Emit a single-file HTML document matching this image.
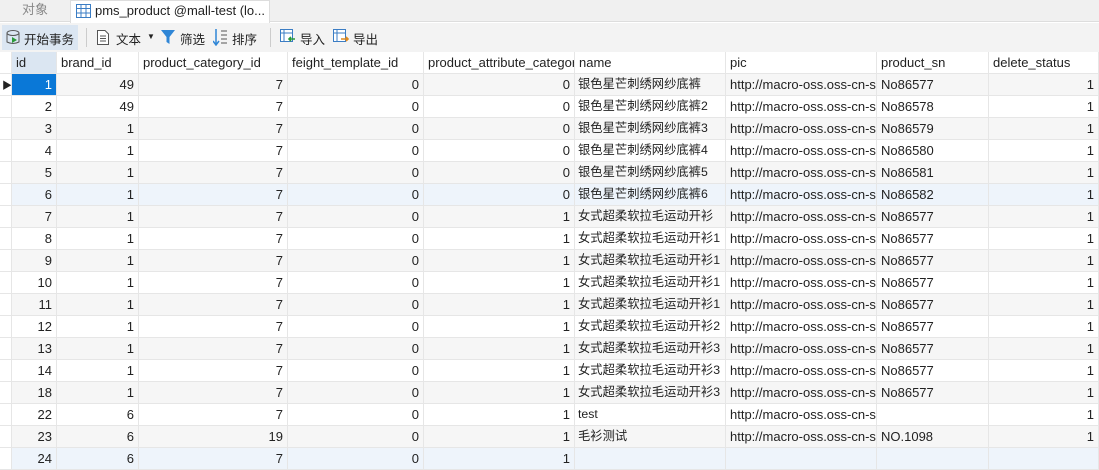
<!DOCTYPE html><html><head><meta charset="utf-8"><style>
*{margin:0;padding:0;box-sizing:border-box}
body{width:1099px;height:456px;overflow:hidden;background:#fff;font-family:"Liberation Sans","Noto Sans CJK SC",sans-serif;font-size:13px;color:#222;position:relative}
.tabs{position:absolute;left:0;top:0;width:1099px;height:22px;background:#f0f0f0;border-bottom:1px solid #ddd}
.t1{position:absolute;left:0;top:0;width:70px;height:22px;line-height:20px;text-align:center;color:#888}
.t2{position:absolute;left:70px;top:0;width:200px;height:23px;background:#fff;border:1px solid #ddd;border-bottom:none;line-height:20px;padding-left:24px}
.tb{position:absolute;left:0;top:23px;width:1099px;height:29px;background:#f3f3f3}
.tb span{position:absolute;top:6px;font-size:12.5px}
.grid{position:absolute;left:0;top:52px}
.row{position:absolute;left:0;height:22px;width:1099px}
.c{position:absolute;top:0;height:22px;line-height:21px;border-right:1px solid #e6e6e6;border-bottom:1px solid #e6e6e6;padding:0 4px;white-space:nowrap;overflow:hidden}
.r{text-align:right}
.nm{font-size:12.3px;padding-left:3px}
.hd .c{background:#fff;height:22px;line-height:21px;font-size:13px}
</style></head><body>
<div class="tabs"><div class="t1">对象</div><div class="t2"><svg style="position:absolute;left:5px;top:3px" width="15" height="14"><rect x="0.5" y="0.5" width="14" height="13" fill="#fff" stroke="#3b7dc4"/><path d="M0 4.5H15M0 9H15M5 0V14M10 0V14" stroke="#3b7dc4"/></svg>pms_product @mall-test (lo...</div></div>
<div class="tb">
<div style="position:absolute;left:2px;top:2px;width:76px;height:25px;background:#dbe6f2"></div>
<svg style="position:absolute;left:6px;top:7px" width="14" height="15"><ellipse cx="7" cy="3" rx="6" ry="2.5" fill="none" stroke="#555"/><path d="M1 3V12Q7 15 13 12V3" fill="none" stroke="#555"/><path d="M6 7L11 10L6 13Z" fill="#2a9a3a"/></svg>
<span style="left:24px">开始事务</span>
<div style="position:absolute;left:86px;top:5px;width:1px;height:19px;background:#ccc"></div>
<svg style="position:absolute;left:97px;top:7px" width="12" height="15"><path d="M0.5 0.5H8L11.5 4V14.5H0.5Z" fill="#fff" stroke="#555"/><path d="M3 6H9M3 8.5H9M3 11H9" stroke="#555"/></svg>
<span style="left:116px">文本</span><span style="left:147px;font-size:8px;top:9px">▼</span>
<svg style="position:absolute;left:161px;top:7px" width="14" height="15"><path d="M0 0H14L8.5 7V14L5.5 12V7Z" fill="#2f86d6"/></svg>
<span style="left:180px">筛选</span>
<svg style="position:absolute;left:213px;top:6px" width="14" height="17"><path d="M3 0V15M0 12L3 16L6 12" stroke="#2f86d6" fill="none" stroke-width="1.5"/><path d="M8 2H14M8 6H14M8 10H14M8 14H14" stroke="#555"/></svg>
<span style="left:232px">排序</span>
<div style="position:absolute;left:270px;top:5px;width:1px;height:19px;background:#ccc"></div>
<svg style="position:absolute;left:280px;top:6px" width="16" height="16"><rect x="0.5" y="0.5" width="12" height="12" fill="#fff" stroke="#3b7dc4"/><path d="M0 4H13M4 0V13" stroke="#3b7dc4"/><path d="M15 10H9M11 8L9 10L11 12" stroke="#2a9a3a" stroke-width="1.6" fill="none"/></svg>
<span style="left:300px">导入</span>
<svg style="position:absolute;left:333px;top:6px" width="16" height="16"><rect x="0.5" y="0.5" width="12" height="12" fill="#fff" stroke="#3b7dc4"/><path d="M0 4H13M4 0V13" stroke="#3b7dc4"/><path d="M8 10H15M13 8L15 10L13 12" stroke="#e08a1e" stroke-width="1.6" fill="none"/></svg>
<span style="left:353px">导出</span>
</div>
<div class="grid" id="g"></div>
<script>
const cols=[[0,12],[12,45],[57,82],[139,149],[288,136],[424,151],[575,151],[726,151],[877,112],[989,110]];
const hdr=["","id","brand_id","product_category_id","feight_template_id","product_attribute_category_id","name","pic","product_sn","delete_status"];
const n1="银色星芒刺绣网纱底裤",n2="女式超柔软拉毛运动开衫";
const U="http://macro-oss.oss-cn-shenzhen.aliyuncs.com";
const data=[[1,49,7,0,0,n1,"No86577"],[2,49,7,0,0,n1+"2","No86578"],[3,1,7,0,0,n1+"3","No86579"],[4,1,7,0,0,n1+"4","No86580"],[5,1,7,0,0,n1+"5","No86581"],[6,1,7,0,0,n1+"6","No86582"],[7,1,7,0,1,n2,"No86577"],[8,1,7,0,1,n2+"1","No86577"],[9,1,7,0,1,n2+"1","No86577"],[10,1,7,0,1,n2+"1","No86577"],[11,1,7,0,1,n2+"1","No86577"],[12,1,7,0,1,n2+"2","No86577"],[13,1,7,0,1,n2+"3","No86577"],[14,1,7,0,1,n2+"3","No86577"],[18,1,7,0,1,n2+"3","No86577"],[22,6,7,0,1,"test",""],[23,6,19,0,1,"毛衫测试","NO.1098"],[24,6,7,0,1,"",""]];
let h='<div class="row hd" style="top:0">';
cols.forEach((c,i)=>{h+=`<div class="c" style="left:${c[0]}px;width:${c[1]}px;${i==1?'background:#dbe6f2;':''}">${hdr[i]}</div>`});
h+='</div>';
data.forEach((d,k)=>{
 let bg=k==5||k==17?'#eef4fb':(k%2==0?'#f6f6f6':'#fff');
 h+=`<div class="row" style="top:${22+k*22}px;background:${bg}">`;
 const v=["",d[0],d[1],d[2],d[3],d[4],d[5],k==17?"":U,d[6],k==17?"":1];
 cols.forEach((c,i)=>{
  let st=`left:${c[0]}px;width:${c[1]}px;`;
  let cls='c'+((i>=1&&i<=5)||i==9?' r':'')+(i==6?' nm':'');
  if(i==0){st+='background:#fff;';}
  if(k==0&&i==1)st+='background:#0a78d7;color:#fff;';
  let t=v[i];
  if(k==0&&i==0)t='<span style="font-size:10px;margin-left:-2px">▶</span>';
  h+=`<div class="${cls}" style="${st}">${t}</div>`;
 });
 h+='</div>';
});
document.getElementById('g').innerHTML=h;
</script>
</body></html>
